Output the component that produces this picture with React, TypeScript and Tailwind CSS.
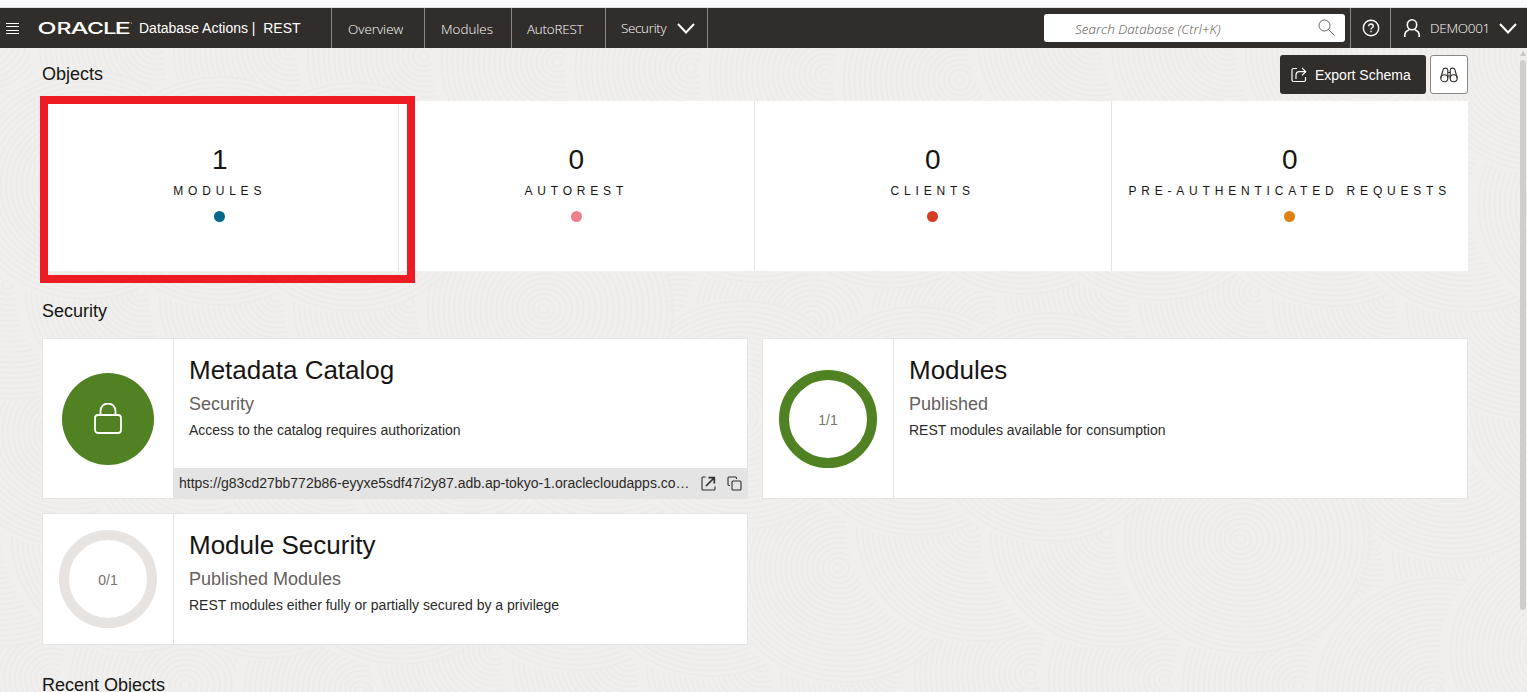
import type { ReactNode } from "react";

const metrics = [
  { count: 1, label: "MODULES", dot: "bg-[#00688c]" },
  { count: 0, label: "AUTOREST", dot: "bg-[#f07e8c]" },
  { count: 0, label: "CLIENTS", dot: "bg-[#d63b25]" },
  { count: 0, label: "PRE-AUTHENTICATED REQUESTS", dot: "bg-[#df800f]" },
];

const radii = Array.from({ length: 22 }, (_, i) => 5 + i * 5.6);

// Overlapping ring clusters, scattered over the page in a shuffled paint order
const swirls = Array.from({ length: 72 }, (_, n) => {
  const k = (n * 29) % 72;
  const col = k % 12;
  const row = Math.floor(k / 12);
  return {
    x: col * 138 + (row % 2) * 65 + ((k * 37) % 41) - 20,
    y: row * 122 + ((k * 53) % 47) - 10,
  };
});

const logoLetters = [
  { ch: "O", x: -0.5, w: 19 },
  { ch: "R", x: 18.5, w: 15 },
  { ch: "A", x: 32.5, w: 18 },
  { ch: "C", x: 49, w: 17 },
  { ch: "L", x: 65, w: 13.5 },
  { ch: "E", x: 76.5, w: 16.5 },
];

function Texture() {
  return (
    <svg className="absolute inset-0 h-full w-full" aria-hidden="true">
      {swirls.map((s, n) => (
        <g key={n} fill="none" stroke="#ecebe9" strokeWidth="1.8">
          <ellipse cx={s.x} cy={s.y} rx="126" ry="116" fill="#f0efed" stroke="none" />
          {radii.map((r) => (
            <ellipse key={r} cx={s.x + r * 0.06} cy={s.y} rx={r} ry={r * 0.93} />
          ))}
        </g>
      ))}
    </svg>
  );
}

function Chevron() {
  return (
    <svg className="shrink-0" width="18" height="11" viewBox="0 0 18 11" fill="none" stroke="#fff" strokeWidth="2">
      <path d="M1 1l8 8.5L17 1" />
    </svg>
  );
}

function Ring({ value, done }: { value: string; done: boolean }) {
  return (
    <div
      className={
        done
          ? "flex size-[98px] items-center justify-center rounded-full border-[10px] border-[#508223] text-sm text-[#75716d]"
          : "flex size-[98px] items-center justify-center rounded-full border-[10px] border-[#e6e3e1] text-sm text-[#75716d]"
      }
    >
      <span className="pt-0.5">{value}</span>
    </div>
  );
}

function Card({ badge, title, sub, text, footer, height }: {
  badge: ReactNode; title: string; sub: string; text: string; footer?: ReactNode; height: string;
}) {
  return (
    <article className={`flex ${height} border border-[#e4e4e4] bg-white`}>
      <div className="flex w-[131px] shrink-0 items-center justify-center border-r border-[#e4e4e4]">{badge}</div>
      <div className="flex min-w-0 flex-1 flex-col">
        <div className="flex-1 px-[15px] pt-[15px]">
          <h3 className="text-[26px] leading-8">{title}</h3>
          <p className="mt-1.5 text-lg leading-6 text-[#65615e]">{sub}</p>
          <p className="mt-1 text-sm leading-5 text-[#2c2a28]">{text}</p>
        </div>
        {footer}
      </div>
    </article>
  );
}

export default function App() {
  return (
    <div className="flex h-[692px] w-full flex-col overflow-hidden bg-[#f0efed] font-['Liberation_Sans',Arial,sans-serif] text-[#161513]">
      <div className="h-2 shrink-0 border-b border-[#dedde1] bg-[#f9f9fe]" />
      <header className="flex h-10 shrink-0 bg-[#312d2a] text-white">
        <div className="flex w-[331px] items-center pl-1.5">
          <svg width="13" height="11" viewBox="0 0 13 11" stroke="#fff" strokeWidth="1">
            <path d="M0 .5h13M0 3.5h13M0 7.5h13M0 10.5h13" />
          </svg>
          <svg className="ml-[19px] overflow-visible" width="95" height="16" viewBox="0 0 95 16">
            <text y="14" fontSize="16.5" fontWeight="500" fontFamily="Inter, sans-serif" fill="#fff">
              {logoLetters.map((l) => (
                <tspan key={l.ch} x={l.x} textLength={l.w} lengthAdjust="spacingAndGlyphs">{l.ch}</tspan>
              ))}
            </text>
            <circle cx="93.5" cy="3" r=".7" fill="#aaa" />
          </svg>
          <span className="ml-1.5 text-sm whitespace-pre">Database Actions |  REST</span>
        </div>
        <nav className="flex font-['Open_Sans','Noto_Sans',sans-serif] text-[13.4px] font-[350]">
          <a className="flex w-[93px] items-center border-l border-[#8b8784] pt-0.5 pl-4">Overview</a>
          <a className="flex w-[87px] items-center border-l border-[#8b8784] pt-0.5 pl-4">Modules</a>
          <a className="flex w-[94px] items-center border-l border-[#8b8784] pt-0.5 pl-[15px] tracking-[-0.2px]">AutoREST</a>
          <a className="flex w-[103px] items-center justify-between border-x border-[#8b8784] pr-3 pl-[15px] tracking-[-0.3px]">
            Security
            <Chevron />
          </a>
        </nav>
        <div className="ml-auto flex items-center font-['Open_Sans','Noto_Sans',sans-serif] text-[13.5px] font-[350]">
          <div className="mr-[5px] flex h-7 w-[301px] items-center justify-between rounded-[3px] bg-white pr-[10px] pl-[31px] font-light text-[#5a5551] italic">
            <span className="pt-0.5">Search Database (Ctrl+K)</span>
            <svg className="-mt-0.5" width="17" height="17" viewBox="0 0 17 17" fill="none" stroke="#66615d">
              <circle cx="6.5" cy="6.5" r="5.5" />
              <path d="M10.5 10.5l6 6" />
            </svg>
          </div>
          <div className="flex h-10 w-10 items-center justify-center border-l border-[#8b8784]">
            <svg width="18" height="18" viewBox="0 0 18 18" fill="none" stroke="#fff" strokeWidth="1.4">
              <circle cx="9" cy="9" r="7.7" />
              <path d="M6.7 7.2C6.7 4.2 11.3 4.3 11.3 7.2c0 1.5-2.3 1.7-2.3 3.3M9 11.8v1.4" />
            </svg>
          </div>
          <div className="flex h-10 w-[137px] items-center border-l border-[#8b8784] pl-[13px]">
            <svg width="16" height="18" viewBox="0 0 16 18" fill="none" stroke="#fff" strokeWidth="1.6">
              <ellipse cx="8" cy="5.8" rx="4.7" ry="5" />
              <path d="M.8 18v-1.5c0-3 1.8-4.7 4.2-5.7M15.2 18v-1.5c0-3-1.8-4.7-4.2-5.7" />
            </svg>
            <span className="mr-2.5 ml-2.5 w-[59px] text-[13.5px] tracking-[-0.3px]">DEMO001</span>
            <Chevron />
          </div>
        </div>
      </header>

      <div className="relative flex min-h-0 flex-1">
        <Texture />
        <main className="relative w-[1469px] pl-[42px]">
          <div className="flex h-[53px] items-start justify-between pt-[7px]">
            <h2 className="pt-[5px] text-lg leading-7">Objects</h2>
            <div className="flex gap-1 pr-px">
              <button className="flex h-[39px] w-[146px] items-center rounded-[3px] bg-[#312d2a] pl-[11px] text-sm font-medium text-white">
                <svg className="mr-2" width="16" height="16" viewBox="0 0 16 16" fill="none" stroke="#fff" strokeWidth="1.2">
                  <path d="M6 1.500H2.500a1.500 1.500 0 0 0-1.500 1.500v10a1.500 1.500 0 0 0 1.500 1.500H13a1.500 1.500 0 0 0 1.500-1.500v-3M5 12V8.200c0-2.200 1.100-3.500 3.300-3.500h6M11 1l3.700 3.700L11 8.400" />
                </svg>
                Export Schema
              </button>
              <button className="flex h-[39px] w-[38px] items-center justify-center rounded-[3px] border border-[#8b8784] bg-white">
                <svg width="18" height="16" viewBox="0 0 18 16" fill="none" stroke="#312d2a" strokeWidth="1.1">
                  <circle cx="4.300" cy="11.200" r="3.500" />
                  <circle cx="13.700" cy="11.200" r="3.500" />
                  <path d="M.8 11L3 3c.5-2.500 4.500-2.500 4.800 0v8.500M17.200 11L15 3c-.5-2.500-4.500-2.500-4.800 0v8.500M7.800 5.500h2.400M7.800 9h2.400" />
                </svg>
              </button>
            </div>
          </div>
          <section className="relative mr-px grid h-[170px] grid-cols-4 bg-white">
            {metrics.map((m, i) => (
              <div
                key={m.label}
                className={i === 3 ? "flex flex-col items-center pt-[43px]" : "flex flex-col items-center border-r border-[#e4e4e4] pt-[43px]"}
              >
                <span className="text-[28px] leading-8">{m.count}</span>
                <span className="mt-[6px] text-xs leading-[18px] tracking-[4.8px] whitespace-nowrap">{m.label}</span>
                <span className={`mt-[11px] size-[11px] rounded-full ${m.dot}`} />
              </div>
            ))}
            <div className="absolute -top-[5px] -left-0.5 h-[187px] w-[375px] border-8 border-[#ed1c24]" />
          </section>

          <h2 className="mt-[26px] text-lg leading-7">Security</h2>
          <section className="mr-px mt-[13px] grid grid-cols-2 gap-x-[14px] gap-y-[14px]">
            <Card
              height="h-[161px]"
              title="Metadata Catalog"
              sub="Security"
              text="Access to the catalog requires authorization"
              badge={
                <div className="flex size-[92px] items-center justify-center rounded-full bg-[#508223]">
                  <svg width="28" height="31" viewBox="0 0 28 31" fill="none" stroke="#fff" strokeWidth="1.800">
                    <rect x="1" y="12" width="26" height="18" rx="3" />
                    <path d="M6.500 12V8a7.500 7.500 0 0 1 15 0v4" />
                  </svg>
                </div>
              }
              footer={
                <div className="flex h-[30px] items-center bg-[#e4e4e4] pl-[5px] text-sm text-[#2c2a28]">
                  <span className="w-[511px] truncate">https://g83cd27bb772b86-eyyxe5sdf47i2y87.adb.ap-tokyo-1.oraclecloudapps.com/ords/demo001/</span>
                  <svg className="ml-[11px]" width="15" height="15" viewBox="0 0 15 15" fill="none" stroke="#312d2a" strokeWidth="1.1">
                    <path d="M4.500 1H2a1 1 0 0 0-1 1v11a1 1 0 0 0 1 1h11a1 1 0 0 0 1-1v-2.500" />
                    <path d="M5 10l8-8M7.500 1.700h5.800v5.800" strokeWidth="1.700" />
                  </svg>
                  <svg className="ml-[11px]" width="15" height="15" viewBox="0 0 15 15" fill="none" stroke="#312d2a" strokeWidth="1.1">
                    <rect x="5" y="5" width="9" height="9" rx="1" />
                    <path d="M3 9.500H2a1 1 0 0 1-1-1V2a1 1 0 0 1 1-1h6.500a1 1 0 0 1 1 1v1" />
                  </svg>
                </div>
              }
            />
            <Card height="h-[161px]" title="Modules" sub="Published" text="REST modules available for consumption" badge={<Ring value="1/1" done />} />
            <Card height="h-[132px]" title="Module Security" sub="Published Modules" text="REST modules either fully or partially secured by a privilege" badge={<Ring value="0/1" done={false} />} />
          </section>
          <h2 className="mt-[26px] text-lg leading-7">Recent Objects</h2>
        </main>
        <div className="relative ml-auto flex w-2 flex-col items-center pt-[3px]">
          <svg width="6" height="5" viewBox="0 0 6 5" fill="#c9c7c5"><path d="M3 0l3 5H0z" /></svg>
          <div className="mt-1 h-[550px] w-1.5 rounded-full bg-[#d0cecb]" />
        </div>
      </div>
    </div>
  );
}
